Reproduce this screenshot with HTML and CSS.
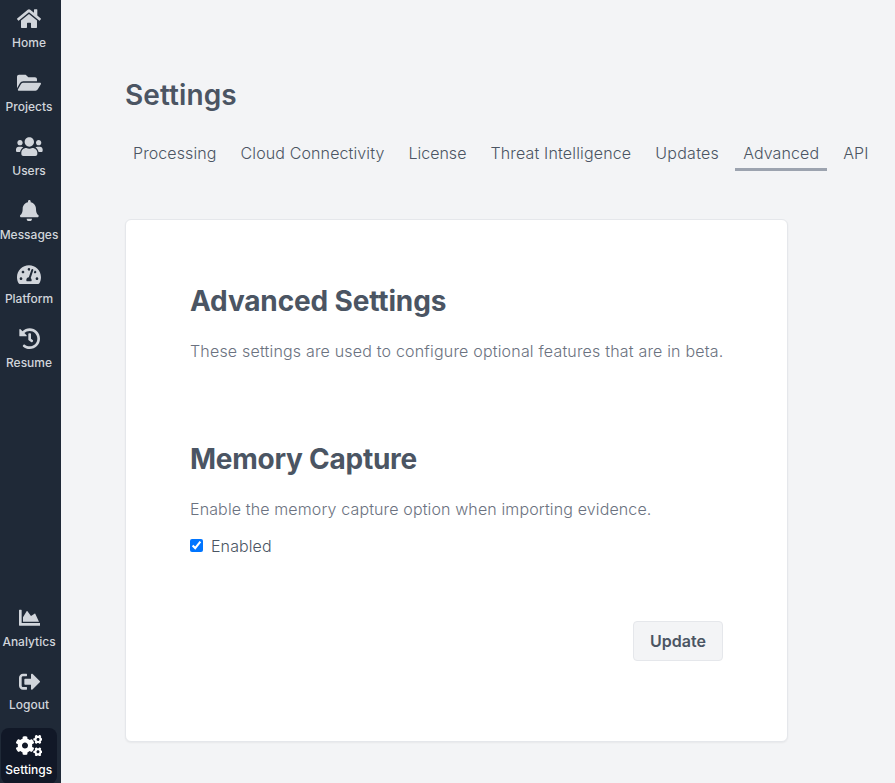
FILE: index.html
```html
<!DOCTYPE html>
<html lang="en">
<head>
<meta charset="utf-8">
<title>Settings</title>
<link rel="stylesheet" href="styles.css">
</head>
<body>
<nav class="sidebar">
  <a class="item"><svg viewBox="0 0 576 512"><path d="M280.37 148.26L96 300.11V464a16 16 0 0 0 16 16l112.06-.29a16 16 0 0 0 15.92-16V368a16 16 0 0 1 16-16h64a16 16 0 0 1 16 16v95.64a16 16 0 0 0 16 16.05L464 480a16 16 0 0 0 16-16V300L295.67 148.26a12.19 12.19 0 0 0-15.3 0zM571.6 251.47L488 182.56V44.05a12 12 0 0 0-12-12h-56a12 12 0 0 0-12 12v72.61L318.47 43a48 48 0 0 0-61 0L4.34 251.47a12 12 0 0 0-1.6 16.9l25.5 31A12 12 0 0 0 45.15 301l235.22-193.74a12.19 12.19 0 0 1 15.3 0L530.9 301a12 12 0 0 0 16.9-1.6l25.5-31a12 12 0 0 0-1.7-16.93z"/></svg><span>Home</span></a>
  <a class="item"><svg viewBox="0 0 576 512"><path d="M572.694 292.093L500.27 416.248A63.997 63.997 0 0 1 444.989 448H45.025c-18.523 0-30.064-20.093-20.731-36.093l72.424-124.155A64 64 0 0 1 152 256h399.964c18.523 0 30.064 20.093 20.73 36.093zM152 224h328v-48c0-26.51-21.49-48-48-48H272l-64-64H48C21.49 64 0 85.49 0 112v278.046l69.077-118.418C86.214 242.25 117.989 224 152 224z"/></svg><span>Projects</span></a>
  <a class="item"><svg viewBox="0 0 640 512"><path d="M96 224c35.3 0 64-28.7 64-64s-28.7-64-64-64-64 28.7-64 64 28.7 64 64 64zm448 0c35.3 0 64-28.7 64-64s-28.7-64-64-64-64 28.7-64 64 28.7 64 64 64zm32 32h-64c-17.6 0-33.5 7.1-45.1 18.6 40.3 22.1 68.9 62 75.1 109.4h66c17.7 0 32-14.3 32-32v-32c0-35.3-28.7-64-64-64zm-256 0c61.9 0 112-50.1 112-112S381.9 32 320 32 208 82.1 208 144s50.1 112 112 112zm76.8 32h-8.3c-20.8 10-43.9 16-68.5 16s-47.6-6-68.5-16h-8.3C179.6 288 128 339.6 128 403.2V432c0 26.5 21.5 48 48 48h288c26.5 0 48-21.5 48-48v-28.8c0-63.6-51.6-115.2-115.2-115.2zm-223.7-13.4C161.5 263.1 145.6 256 128 256H64c-35.3 0-64 28.7-64 64v32c0 17.7 14.3 32 32 32h65.9c6.3-47.4 34.9-87.3 75.2-109.4z"/></svg><span>Users</span></a>
  <a class="item"><svg viewBox="0 0 448 512"><path d="M224 512c35.32 0 63.97-28.65 63.97-64H160.03c0 35.35 28.65 64 63.97 64zm215.39-149.71c-19.32-20.76-55.47-51.99-55.47-154.29 0-77.7-54.48-139.9-127.94-155.16V32c0-17.67-14.32-32-31.98-32s-31.98 14.33-31.98 32v20.84C118.56 68.1 64.08 130.3 64.08 208c0 102.3-36.15 133.53-55.47 154.29-6 6.45-8.66 14.16-8.61 21.71.11 16.4 12.98 32 32.1 32h383.8c19.12 0 32-15.6 32.1-32 .05-7.55-2.61-15.27-8.61-21.71z"/></svg><span>Messages</span></a>
  <a class="item"><svg viewBox="0 0 576 512"><path d="M288 32C128.94 32 0 160.94 0 320c0 52.8 14.25 102.26 39.06 144.8 5.61 9.62 16.3 15.2 27.44 15.2h443c11.14 0 21.83-5.58 27.44-15.2C561.75 422.26 576 372.8 576 320c0-159.06-128.94-288-288-288zm0 64c14.71 0 26.58 10.13 30.32 23.65-1.11 2.26-2.64 4.23-3.45 6.67l-9.22 27.67c-5.13 3.49-10.97 6.01-17.64 6.01-17.67 0-32-14.33-32-32S270.33 96 288 96zM96 384c-17.67 0-32-14.33-32-32s14.33-32 32-32 32 14.33 32 32-14.33 32-32 32zm48-160c-17.67 0-32-14.33-32-32s14.33-32 32-32 32 14.33 32 32-14.33 32-32 32zm246.77-72.41l-61.33 184C343.13 347.33 352 364.54 352 384c0 11.72-3.38 22.55-8.88 32H232.88c-5.5-9.45-8.88-20.28-8.88-32 0-33.94 26.5-61.43 59.9-63.59l61.34-184.01c4.17-12.56 17.73-19.45 30.36-15.17 12.57 4.19 19.35 17.79 15.17 30.36zm14.66 57.2l15.52-46.55c3.47-1.29 7.13-2.23 11.05-2.23 17.67 0 32 14.33 32 32s-14.33 32-32 32c-11.38-.01-21.25-6.1-26.57-15.22zM480 384c-17.67 0-32-14.33-32-32s14.33-32 32-32 32 14.33 32 32-14.33 32-32 32z"/></svg><span>Platform</span></a>
  <a class="item"><svg viewBox="0 0 512 512"><path d="M504 255.531c.253 136.64-111.18 248.372-247.82 248.468-59.015.042-113.223-20.53-155.822-54.911-11.077-8.94-11.905-25.541-1.839-35.607l11.267-11.267c8.609-8.609 22.353-9.551 31.891-1.984C173.062 425.135 212.781 440 256 440c101.705 0 184-82.311 184-184 0-101.705-82.311-184-184-184-48.814 0-93.149 18.969-126.068 49.932l50.754 50.754c10.08 10.08 2.941 27.314-11.313 27.314H24c-8.837 0-16-7.163-16-16V38.627c0-14.254 17.234-21.393 27.314-11.314l49.372 49.372C129.209 34.136 189.552 8 256 8c136.81 0 247.747 110.78 248 247.531zm-180.912 78.784l9.823-12.63c8.138-10.463 6.253-25.542-4.21-33.679L288 256.349V152c0-13.255-10.745-24-24-24h-16c-13.255 0-24 10.745-24 24v135.651l65.409 50.874c10.463 8.137 25.541 6.253 33.679-4.21z"/></svg><span>Resume</span></a>
  <div class="spacer"></div>
  <a class="item"><svg viewBox="0 0 512 512"><path d="M500 384c6.6 0 12 5.4 12 12v40c0 6.6-5.4 12-12 12H12c-6.6 0-12-5.4-12-12V76c0-6.6 5.4-12 12-12h40c6.6 0 12 5.4 12 12v308h436zM372.7 159.5L288 216l-85.3-113.7c-5.1-6.8-15.5-6.3-19.9 1L96 248v104h384l-89.9-187.8c-3.2-6.5-11.4-8.7-17.4-4.7z"/></svg><span>Analytics</span></a>
  <a class="item logout"><svg viewBox="0 0 512 512"><path d="M497 273L329 441c-15 15-41 4.5-41-17v-96H152c-13.3 0-24-10.7-24-24v-96c0-13.3 10.7-24 24-24h136V88c0-21.4 25.9-32 41-17l168 168c9.3 9.4 9.3 24.6 0 34zM192 436v-40c0-6.6-5.4-12-12-12H96c-17.7 0-32-14.3-32-32V160c0-17.7 14.3-32 32-32h84c6.6 0 12-5.4 12-12V76c0-6.6-5.4-12-12-12H96c-53 0-96 43-96 96v192c0 53 43 96 96 96h84c6.6 0 12-5.4 12-12z"/></svg><span>Logout</span></a>
  <a class="item active"><svg viewBox="0 0 640 512"><path id="cog" d="M512.1 191l-8.2 14.3c-3 5.3-9.4 7.5-15.1 5.4-11.8-4.4-22.6-10.7-32.1-18.6-4.6-3.8-5.8-10.5-2.8-15.7l8.2-14.3c-6.9-8-12.3-17.3-15.9-27.4h-16.5c-6 0-11.2-4.3-12.2-10.3-2-12-2.1-24.6 0-37.1 1-6 6.2-10.4 12.2-10.4h16.5c3.6-10.1 9-19.4 15.9-27.4l-8.2-14.3c-3-5.2-1.9-11.9 2.8-15.7 9.5-7.9 20.4-14.2 32.1-18.6 5.7-2.1 12.1.1 15.1 5.4l8.2 14.3c10.5-1.9 21.2-1.9 31.7 0L552 6.3c3-5.3 9.4-7.5 15.1-5.4 11.8 4.4 22.6 10.7 32.1 18.6 4.6 3.8 5.8 10.5 2.8 15.7l-8.2 14.3c6.9 8 12.3 17.3 15.9 27.4h16.5c6 0 11.2 4.3 12.2 10.3 2 12 2.1 24.6 0 37.1-1 6-6.2 10.4-12.2 10.4h-16.5c-3.6 10.1-9 19.4-15.9 27.4l8.2 14.3c3 5.2 1.9 11.9-2.8 15.7-9.5 7.9-20.4 14.2-32.1 18.6-5.7 2.1-12.1-.1-15.1-5.4l-8.2-14.3c-10.4 1.9-21.2 1.9-31.7 0zm-10.5-58.8c38.5 29.6 82.4-14.3 52.8-52.8-38.5-29.7-82.4 14.3-52.8 52.8z"/><use href="#cog" y="298.9"/><path d="M386.3 286.1l33.7 16.8c10.1 5.8 14.5 18.1 10.5 29.1-8.9 24.2-26.4 46.4-42.6 65.8-7.4 8.9-20.2 11.1-30.3 5.3l-29.1-16.8c-16 13.7-34.6 24.6-54.9 31.7v33.6c0 11.6-8.3 21.6-19.7 23.6-24.6 4.2-50.4 4.4-75.9 0-11.5-2-20-11.9-20-23.6V418c-20.3-7.2-38.9-18-54.9-31.7L74 403c-10 5.8-22.9 3.6-30.3-5.3-16.2-19.4-33.3-41.6-42.2-65.7-4-10.9.4-23.2 10.5-29.1l33.3-16.8c-3.9-20.9-3.9-42.4 0-63.4L12 205.8c-10.1-5.8-14.6-18.1-10.5-29 8.9-24.2 26-46.4 42.2-65.8 7.4-8.9 20.2-11.1 30.3-5.3l29.1 16.8c16-13.7 34.6-24.6 54.9-31.7V57.1c0-11.5 8.2-21.5 19.6-23.5 24.6-4.2 50.5-4.4 76-.1 11.5 2 20 11.9 20 23.6v33.6c20.3 7.2 38.9 18 54.9 31.7l29.1-16.8c10-5.8 22.9-3.6 30.3 5.3 16.2 19.4 33.2 41.6 42.1 65.8 4 10.9.1 23.2-10 29.1l-33.7 16.8c3.9 21 3.9 42.5 0 63.5zm-117.6 21.1c59.2-77-28.7-164.9-105.7-105.7-59.2 77 28.7 164.9 105.7 105.7z"/></svg><span>Settings</span></a>
</nav>
<main class="content">
  <h1 class="title">Settings</h1>
  <div class="tabs">
    <a class="tab">Processing</a>
    <a class="tab">Cloud Connectivity</a>
    <a class="tab">License</a>
    <a class="tab">Threat Intelligence</a>
    <a class="tab">Updates</a>
    <a class="tab current">Advanced</a>
    <a class="tab">API</a>
  </div>
  <section class="card">
    <h2>Advanced Settings</h2>
    <p class="intro">These settings are used to configure optional features that are in beta.</p>
    <h2 class="second">Memory Capture</h2>
    <p>Enable the memory capture option when importing evidence.</p>
    <label class="check"><input type="checkbox" checked><span>Enabled</span></label>
    <div class="actions"><button class="update">Update</button></div>
  </section>
</main>
</body>
</html>
```
FILE: styles.css
```css
* { box-sizing: border-box; }
body {
  margin: 0;
  height: 783px;
  display: flex;
  overflow: hidden;
  background: #f3f4f6;
  color: #4b5563;
  font: 300 16px/24px Inter, "Liberation Sans", sans-serif;
}
.sidebar {
  width: 61px;
  flex: none;
  display: flex;
  flex-direction: column;
  background: #1f2937;
  padding: 1px 3.5px 0 1px;
}
.item {
  height: 56px;
  margin-bottom: 8px;
  flex: none;
  display: flex;
  flex-direction: column;
  align-items: center;
  padding-top: 7px;
  border-radius: 8px;
  color: #d1d5db;
  font-size: 12px;
  font-weight: 500;
  line-height: 16px;
}
.item svg {
  height: 21.33px;
  margin-bottom: 6px;
  fill: currentColor;
  flex: none;
}
.item span { margin-left: -.5px; }
.item.logout svg { margin-bottom: 5px; }
.item.active {
  margin-bottom: -1px;
  margin-right: .5px;
  background: #111827;
  color: #fff;
}
.spacer { flex: 1; }
.content { padding: 77px 0 0 64px; flex: 1; min-width: 0; }
.title { margin: 0; font-size: 28px; line-height: 36px; font-weight: 600; letter-spacing: .1px; }
.tabs { display: flex; gap: 8px; margin-top: 24px; white-space: nowrap; }
.tab { padding: 4px 8px 3px; border-bottom: 3px solid transparent; letter-spacing: .1px; }
.tab:nth-child(2) { letter-spacing: .12px; }
.tab:nth-child(3) { letter-spacing: 0; }
.tab:nth-child(4) { letter-spacing: .16px; }
.tab:nth-child(5) { letter-spacing: .26px; }
.tab.current { border-color: #9ca3af; }
.card {
  width: 663px;
  height: 523px;
  margin-top: 48px;
  padding: 63px 64px;
  background: #fff;
  border: 1px solid #e5e7eb;
  border-radius: 6px;
  box-shadow: 0 1px 2px rgba(0, 0, 0, .05);
}
h2 { margin: 0; font-size: 28px; line-height: 36px; font-weight: 700; letter-spacing: -.15px; }
h2.second { margin-top: 78px; letter-spacing: -.25px; }
p { margin: 20px 0 0; color: #6b7280; white-space: nowrap; letter-spacing: .13px; }
p.intro { letter-spacing: .187px; }
.check { display: flex; align-items: center; margin-top: 13px; letter-spacing: .1px; }
.check input { width: 13px; height: 13px; margin: 0 8px 1px 0; }
.actions { display: flex; justify-content: flex-end; margin-top: 63px; }
.update {
  width: 90px;
  height: 40px;
  padding: 0;
  border: 1px solid #e5e7eb;
  border-radius: 4px;
  background: #f3f4f6;
  color: #4b5563;
  font: 600 16px/24px Inter, "Liberation Sans", sans-serif;
}
```
